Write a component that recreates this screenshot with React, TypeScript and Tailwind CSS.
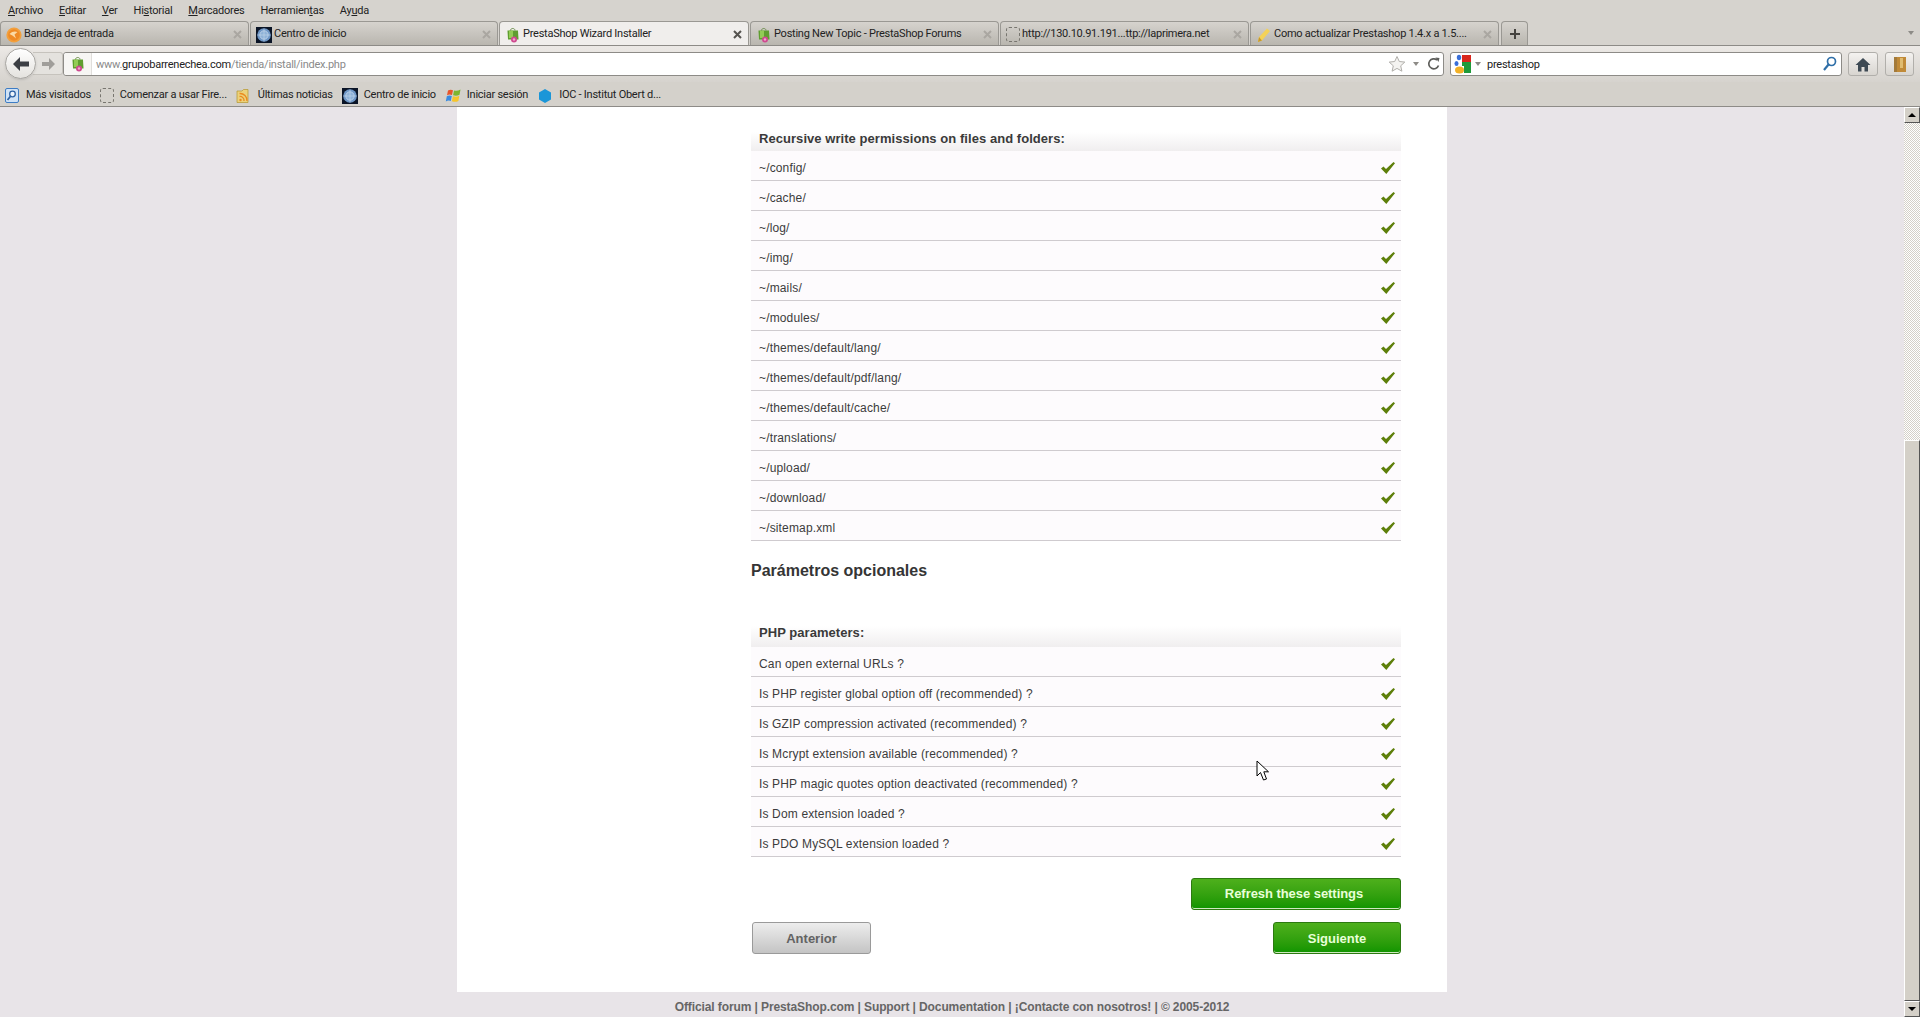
import React from "react";

const chrome = { fontFamily: 'Roboto,"Open Sans",sans-serif' };

function Bag() {
  return (
    <svg width="16" height="16" viewBox="0 0 16 16" className="shrink-0">
      <path d="M2.5 3.5 H13 L13.5 12.5 H3 Z" fill="#5f9e2f" />
      <path d="M4 3.5 H8 V11 H4 Z" fill="#93cc55" />
      <path d="M5.5 3.5 C5.5 0.8 10 0.8 10 3.5" fill="none" stroke="#6f8f50" strokeWidth="1" />
      <circle cx="9" cy="12.5" r="3" fill="#cf4a90" />
      <circle cx="9" cy="12.5" r="1.2" fill="#f0a8cc" />
    </svg>
  );
}
function Globe() {
  return (
    <svg width="16" height="16" viewBox="0 0 16 16" className="shrink-0">
      <rect width="16" height="16" fill="#0a1426" />
      <circle cx="8" cy="8" r="6.8" fill="#6f97c6" />
      <circle cx="8" cy="8" r="4.2" fill="#8fb2d8" stroke="#c3d6ea" strokeWidth="0.8" />
      <path d="M1.5 8 H14.5 M8 1.5 V14.5" stroke="#c3d6ea" strokeWidth="0.6" />
    </svg>
  );
}
function Orange() {
  return (
    <svg width="16" height="16" viewBox="0 0 16 16" className="shrink-0">
      <circle cx="8" cy="8" r="7.6" fill="#f3a03c" />
      <circle cx="8" cy="8" r="5.8" fill="#ef8a25" />
      <path d="M3.5 7 Q7 3.5 11.5 5 L8.5 7.5 L10 11.5 L6.8 8.8 Z" fill="#fbd9a4" />
    </svg>
  );
}
function Dashed() {
  return <div className="h-[15px] w-[14px] shrink-0 rounded-[3px] border border-dashed border-[#77756f]" />;
}
function Pencil() {
  return (
    <svg width="16" height="16" viewBox="0 0 16 16" className="shrink-0">
      <path d="M3 10 L11 1.5 L14 4 L6 13.5 L2 15 Z" fill="#f4d258" />
      <path d="M3 10 L6 13.5 L2 15 Z" fill="#c89a2c" />
    </svg>
  );
}
function WinLogo() {
  return (
    <svg width="16" height="16" viewBox="0 0 16 16" className="shrink-0">
      <path d="M3 2.5 Q5.5 1 8 2.2 L7 7 Q4.5 6 2 7.2 Z" fill="#e8552a" />
      <path d="M9 2.4 Q12 3.6 15.5 1.5 L14.5 6.8 Q11.5 8.3 8.1 7.2 Z" fill="#7db52f" />
      <path d="M1.8 8.3 Q4.3 7 6.8 8 L5.8 13 Q3.5 12 0.8 13.5 Z" fill="#3a8be0" />
      <path d="M7.9 8.2 Q11 9.3 14.3 7.8 L13.4 13 Q10.5 14.6 6.9 13.2 Z" fill="#f6c52a" />
    </svg>
  );
}
function Hex() {
  return (
    <svg width="16" height="16" viewBox="0 0 16 16" className="shrink-0">
      <path d="M8 1 L14 4.5 V11.5 L8 15 L2 11.5 V4.5 Z" fill="#1a96d8" />
    </svg>
  );
}
function Rss() {
  return (
    <svg width="16" height="16" viewBox="0 0 16 16" className="shrink-0">
      <path d="M1 3 H6 L7.5 1.5 H12 V14.5 H1 Z" fill="#ecd27a" stroke="#b3962e" strokeWidth="0.7" />
      <circle cx="4.5" cy="12" r="1.2" fill="#ea8a1f" />
      <path d="M3.5 8.5 A4 4 0 0 1 8 13 M3.5 5.5 A7 7 0 0 1 11 13" fill="none" stroke="#ea8a1f" strokeWidth="1.3" />
    </svg>
  );
}
function MostVisited() {
  return (
    <svg width="16" height="17" viewBox="0 0 16 17" className="shrink-0">
      <rect x="1.5" y="1.5" width="13" height="14" rx="1.5" fill="#cfe2f6" stroke="#3d7cc4" />
      <circle cx="8.5" cy="7" r="2.8" fill="#eef5fc" stroke="#2e62a4" strokeWidth="1.3" />
      <path d="M6.5 9.2 L3.5 13" stroke="#2e62a4" strokeWidth="1.8" />
    </svg>
  );
}
function GoogleG() {
  return (
    <svg width="17" height="20" viewBox="0 0 17 20" className="shrink-0">
      <rect x="8" y="1" width="9" height="7" fill="#d8261c" />
      <path d="M8 8 H17 V19 H10 V12 H8 Z" fill="#1f9a3a" />
      <ellipse cx="5" cy="3.5" rx="2.2" ry="2.8" fill="#3a6fd8" />
      <ellipse cx="2.5" cy="9.5" rx="2" ry="2.6" fill="#3a6fd8" />
      <ellipse cx="5.5" cy="16" rx="4.5" ry="3.5" fill="#f2b026" />
    </svg>
  );
}
function Close({ active }: { active?: boolean }) {
  return (
    <svg width="9" height="9" viewBox="0 0 9 9" className="shrink-0">
      <path d="M1 1 L8 8 M8 1 L1 8" stroke={active ? "#55534f" : "#aaa7a1"} strokeWidth="2" />
    </svg>
  );
}
function Check() {
  return (
    <svg width="16" height="14" viewBox="0 0 16 14" className="shrink-0">
      <path d="M1 7.5 L3.5 5.5 L6 8 L13.5 1 L15 2.2 L6.3 13 Z" fill="#5d7f0a" />
    </svg>
  );
}

const tabs = [
  { t: "Bandeja de entrada", i: <Orange />, w: "w-[249px]" },
  { t: "Centro de inicio", i: <Globe />, w: "w-[248px]" },
  { t: "PrestaShop Wizard Installer", i: <Bag />, w: "w-[250px]", active: true },
  { t: "Posting New Topic - PrestaShop Forums", i: <Bag />, w: "w-[249px]" },
  { t: "http://130.10.91.191...ttp://laprimera.net", i: <Dashed />, w: "w-[249px]" },
  { t: "Como actualizar Prestashop 1.4.x a 1.5....", i: <Pencil />, w: "w-[249px]" },
];

const bookmarks = [
  { t: "Más visitados", i: <MostVisited /> },
  { t: "Comenzar a usar Fire...", i: <Dashed /> },
  { t: "Últimas noticias", i: <Rss /> },
  { t: "Centro de inicio", i: <Globe /> },
  { t: "Iniciar sesión", i: <WinLogo /> },
  { t: "IOC - Institut Obert d...", i: <Hex /> },
];

const files = [
  "~/config/", "~/cache/", "~/log/", "~/img/", "~/mails/", "~/modules/", "~/themes/default/lang/",
  "~/themes/default/pdf/lang/", "~/themes/default/cache/", "~/translations/", "~/upload/", "~/download/", "~/sitemap.xml",
];
const params = [
  "Can open external URLs ?",
  "Is PHP register global option off (recommended) ?",
  "Is GZIP compression activated (recommended) ?",
  "Is Mcrypt extension available (recommended) ?",
  "Is PHP magic quotes option deactivated (recommended) ?",
  "Is Dom extension loaded ?",
  "Is PDO MySQL extension loaded ?",
];

function Header({ children, tall }: { children: React.ReactNode; tall?: boolean }) {
  return (
    <div className={`bg-gradient-to-b from-white to-[#f0eeef] pl-2 text-[13px] font-bold leading-[13px] tracking-[0.05px] text-[#3a3a3a] ${tall ? "h-[21px]" : "h-[19px]"}`}>
      {children}
    </div>
  );
}
function Row({ label }: { label: string }) {
  return (
    <div className="flex h-[30px] items-start justify-between border-b border-[#cfcbcf] bg-[#fdfbfd] pl-2 pr-[5px] pt-[10px] text-xs leading-[15px] tracking-[0.15px] text-[#3c3c3c]">
      <span>{label}</span>
      <Check />
    </div>
  );
}

export default function App() {
  return (
    <div className="relative flex h-[1017px] w-[1920px] flex-col overflow-hidden bg-[#e8e4e8]" style={{ fontFamily: '"Liberation Sans",Arial,sans-serif' }}>
      <div style={chrome} className="flex h-[21px] items-center gap-[16px] bg-[#d6d3ce] pl-[8px] pt-[2px] text-[11px] tracking-[-0.25px] text-[#222]">
        <span><u>A</u>rchivo</span>
        <span><u>E</u>ditar</span>
        <span><u>V</u>er</span>
        <span>Hi<u>s</u>torial</span>
        <span><u>M</u>arcadores</span>
        <span>Herramien<u>t</u>as</span>
        <span>Ay<u>u</u>da</span>
      </div>

      <div style={chrome} className="flex h-[25px] items-end gap-px border-b border-[#8d8b87] bg-[#d6d3ce] text-[11px] tracking-[-0.25px] text-[#222]">
        {tabs.map((tab) => (
          <div
            key={tab.t}
            className={`flex h-[24px] shrink-0 items-center gap-[2px] rounded-t-[4px] border border-b-0 border-[#9a9893] pl-[5px] pr-[6px] pt-[2px] ${tab.w} ${tab.active ? "bg-[#f0eeec]" : "bg-gradient-to-b from-[#d6d3ce] to-[#b9b6af]"}`}
          >
            {tab.i}
            <span className="min-w-0 flex-1 truncate whitespace-nowrap">{tab.t}</span>
            <Close active={tab.active} />
          </div>
        ))}
        <div className="ml-px flex h-[24px] w-[27px] items-center justify-center rounded-t-[4px] border border-b-0 border-[#9a9893] bg-gradient-to-b from-[#d6d3ce] to-[#b9b6af]">
          <svg width="12" height="12" viewBox="0 0 12 12"><path d="M6 1 V11 M1 6 H11" stroke="#45433f" strokeWidth="2" /></svg>
        </div>
        <div className="ml-auto mr-[6px] self-center border-x-[3px] border-t-[4px] border-x-transparent border-t-[#8d8b87]" />
      </div>

      <div style={chrome} className="flex h-[36px] items-start bg-gradient-to-b from-[#ece9e6] to-[#d6d3ce] pt-[6px] text-[11px] tracking-[-0.25px]">
        <div className="z-10 -mt-[4px] ml-[5px] flex h-[31px] w-[31px] shrink-0 items-center justify-center rounded-full border border-[#a8a6a2] bg-gradient-to-b from-white to-[#e4e2de] shadow-sm">
          <svg width="18" height="16" viewBox="0 0 18 16"><path d="M8 1 L1 8 L8 15 V10.5 H17 V5.5 H8 Z" fill="#3c3f44" /></svg>
        </div>
        <div className="-ml-[3px] flex h-[23px] w-[30px] shrink-0 items-center justify-end rounded-r-[3px] border border-l-0 border-[#c6c3bd] bg-[#e4e2de] pr-[6px]">
          <svg width="15" height="14" viewBox="0 0 15 14"><path d="M8 1 L14 7 L8 13 V9 H1 V5 H8 Z" fill="#a09e9a" /></svg>
        </div>
        <div className="flex h-[24px] w-[1381px] shrink-0 items-center rounded-[3px] border border-[#8d8b87] bg-white pr-[2px]">
          <div className="flex h-full w-[28px] shrink-0 items-center justify-center rounded-l-[3px] border-r border-[#e0dedb] bg-[#f7f6f4]"><Bag /></div>
          <span className="ml-[4px] whitespace-nowrap pt-[2px] text-[#8a8a8a]">www.<span className="text-[#222]">grupobarrenechea.com</span>/tienda/install/index.php</span>
          <svg width="18" height="18" viewBox="0 0 18 18" className="ml-auto"><path d="M9 1.5 L11.3 6.5 L16.8 7.1 L12.7 10.8 L13.9 16.2 L9 13.4 L4.1 16.2 L5.3 10.8 L1.2 7.1 L6.7 6.5 Z" fill="#f4f3f1" stroke="#b1afab" /></svg>
          <div className="ml-[7px] border-x-[3px] border-t-[4px] border-x-transparent border-t-[#8d8b87]" />
          <svg width="14" height="14" viewBox="0 0 14 14" className="ml-[8px]"><path d="M11.5 8.5 A5 5 0 1 1 10 3" fill="none" stroke="#5d5d5a" strokeWidth="1.7" /><path d="M8.5 0.5 L12.5 1 L11.5 5 Z" fill="#5d5d5a" /></svg>
        </div>
        <div className="ml-[6px] flex h-[24px] w-[392px] shrink-0 items-center rounded-[3px] border border-[#8d8b87] bg-white pl-[3px] pr-[4px] text-[#222]">
          <GoogleG />
          <div className="ml-[4px] border-x-[3px] border-t-[4px] border-x-transparent border-t-[#8d8b87]" />
          <span className="ml-[6px] pt-[2px]">prestashop</span>
          <svg width="15" height="16" viewBox="0 0 15 16" className="ml-auto"><circle cx="9.5" cy="5.5" r="4" fill="none" stroke="#2f6fa8" strokeWidth="1.7" /><path d="M6.5 8.5 L2 14" stroke="#2f6fa8" strokeWidth="2.2" /></svg>
        </div>
        <div className="ml-[6px] flex h-[24px] w-[30px] shrink-0 items-center justify-center rounded-[3px] border border-[#b1afab] bg-gradient-to-b from-[#f4f2f0] to-[#d8d5d0]">
          <svg width="16" height="15" viewBox="0 0 16 15"><path d="M8 1 L15.5 8 H13 V14.5 H9.5 V10 H6.5 V14.5 H3 V8 H0.5 Z" fill="#3e4a54" /></svg>
        </div>
        <div className="ml-[7px] flex h-[24px] w-[29px] shrink-0 items-center justify-center rounded-[3px] border border-[#b1afab] bg-gradient-to-b from-[#f4f2f0] to-[#d8d5d0]">
          <svg width="14" height="17" viewBox="0 0 14 17"><rect x="1" y="1" width="12" height="15" fill="#c08a38" /><rect x="1" y="1" width="3" height="15" fill="#a37a3a" /><rect x="7" y="2" width="3" height="10" fill="#e0bc70" /></svg>
        </div>
      </div>

      <div style={chrome} className="flex h-[25px] items-center border-b border-[#8d8b87] bg-[#d4d1cb] pl-[4px] pt-[3px] text-[11px] tracking-[-0.25px] text-[#222]">
        {bookmarks.map((b) => (
          <div key={b.t} className="flex items-center gap-[6px] pr-[9px]">
            {b.i}
            <span className="whitespace-nowrap">{b.t}</span>
          </div>
        ))}
      </div>

      <div className="flex min-h-0 flex-1">
        <div className="min-w-0 flex-1">
          <div className="ml-[457px] w-[990px] bg-white pb-[38px] pl-[294px] pr-[46px] pt-[25px]">
            <Header>Recursive write permissions on files and folders:</Header>
            {files.map((f) => <Row key={f} label={f} />)}
            <h2 className="mt-[21px] h-[64px] text-base font-bold leading-[18px] text-[#353535]">Parámetros opcionales</h2>
            <Header tall>PHP parameters:</Header>
            {params.map((p) => <Row key={p} label={p} />)}
            <div className="mt-[21px] flex justify-end">
              <div className="flex h-[32px] w-[210px] items-center justify-center rounded-[3px] border border-[#2c7a10] bg-gradient-to-b from-[#4eb01c] to-[#0c9400] pr-[4px] text-[13px] font-bold tracking-[-0.05px] text-[#e8ffd8] shadow-[inset_0_-1px_0_#cfe8c0]">Refresh these settings</div>
            </div>
            <div className="mt-[12px] flex justify-between pl-px">
              <div className="flex h-[32px] w-[119px] items-center justify-center rounded-[3px] border border-[#9a9a9a] bg-gradient-to-b from-[#ededed] to-[#c4c4c4] pt-[2px] text-[13px] font-bold text-[#636363]">Anterior</div>
              <div className="flex h-[32px] w-[128px] items-center justify-center rounded-[3px] border border-[#2c7a10] bg-gradient-to-b from-[#4eb01c] to-[#0c9400] pt-[2px] text-[13px] font-bold text-[#e8ffd8] shadow-[inset_0_-1px_0_#cfe8c0]">Siguiente</div>
            </div>
          </div>
          <div className="ml-[457px] w-[990px] pt-[8px] text-center text-xs font-bold leading-[15px] tracking-[-0.1px] text-[#666]">
            Official forum | PrestaShop.com | Support | Documentation | ¡Contacte con nosotros! | © 2005-2012
          </div>
        </div>

        <div className="flex w-[16px] shrink-0 flex-col bg-[repeating-conic-gradient(#d4d0c8_0_25%,#ffffff_0_50%)] bg-[length:2px_2px]">
          <div className="flex h-[16px] items-center justify-center border border-b-[#555] border-l-white border-r-[#555] border-t-white bg-[#d4d0c8]">
            <div className="border-x-[4px] border-b-[4px] border-x-transparent border-b-black" />
          </div>
          <div className="h-[317px]" />
          <div className="flex-1 border border-b-[#555] border-l-white border-r-[#555] border-t-white bg-[#d4d0c8]" />
          <div className="flex h-[16px] items-center justify-center border border-b-[#555] border-l-white border-r-[#555] border-t-white bg-[#d4d0c8]">
            <div className="border-x-[4px] border-t-[4px] border-x-transparent border-t-black" />
          </div>
        </div>
      </div>

      <svg width="14" height="22" viewBox="0 0 14 22" className="absolute left-[1256px] top-[760px]">
        <path d="M1 1 V16 L4.5 12.5 L7.5 20 L10.5 19 L7.8 11.8 H12.5 Z" fill="#fff" stroke="#000" strokeWidth="1" />
      </svg>
    </div>
  );
}
